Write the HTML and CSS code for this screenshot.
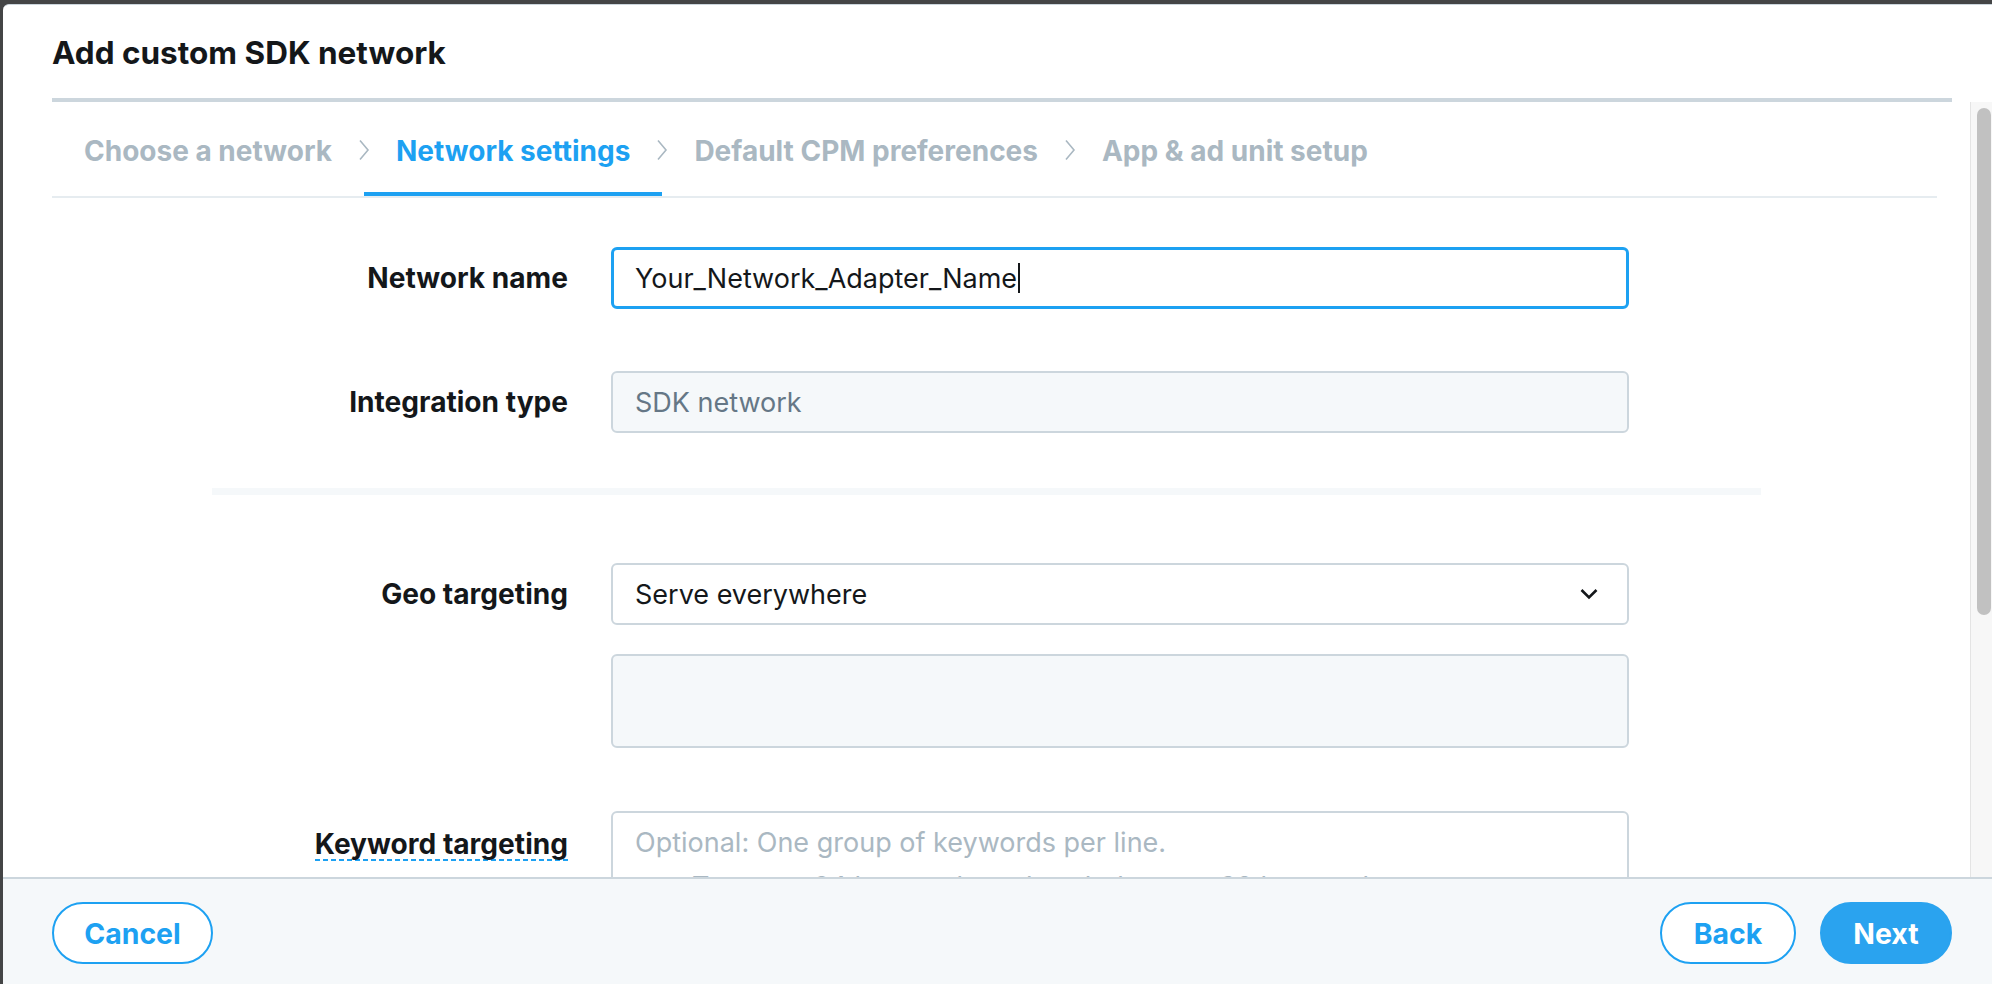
FILE: index.html
```html
<!DOCTYPE html>
<html lang="en">
<head>
<meta charset="utf-8">
<title>Add custom SDK network</title>
<link rel="stylesheet" href="styles.css">
</head>
<body>
<div class="modal">
  <header class="modal-header">
    <h1 class="title">Add custom SDK network</h1>
    <div class="title-rule"></div>
  </header>

  <div class="modal-main">
    <div class="scroll-area">
      <nav class="steps">
        <div class="step">Choose a network</div>
        <div class="sep"><svg width="12" height="22" viewBox="0 0 12 22"><polyline points="2,1.5 10,11 2,20.5" fill="none" stroke="#aab8c2" stroke-width="1.6"/></svg></div>
        <div class="step active">Network settings</div>
        <div class="sep"><svg width="12" height="22" viewBox="0 0 12 22"><polyline points="2,1.5 10,11 2,20.5" fill="none" stroke="#aab8c2" stroke-width="1.6"/></svg></div>
        <div class="step">Default CPM preferences</div>
        <div class="sep"><svg width="12" height="22" viewBox="0 0 12 22"><polyline points="2,1.5 10,11 2,20.5" fill="none" stroke="#aab8c2" stroke-width="1.6"/></svg></div>
        <div class="step">App &amp; ad unit setup</div>
      </nav>

      <div class="form">
        <div class="row row-first">
          <div class="label"><span>Network name</span></div>
          <div class="field focus">Your_Network_Adapter_Name<span class="caret"></span></div>
        </div>

        <div class="row row-gap">
          <div class="label"><span>Integration type</span></div>
          <div class="field readonly">SDK network</div>
        </div>

        <div class="divider"></div>

        <div class="row row-geo">
          <div class="label"><span>Geo targeting</span></div>
          <div class="field select">
            <span>Serve everywhere</span>
            <svg class="select-chevron" width="20" height="12" viewBox="0 0 20 12"><polyline points="2.5,2 10,9.5 17.5,2" fill="none" stroke="#14171a" stroke-width="2.6"/></svg>
          </div>
        </div>

        <div class="row row-box">
          <div class="label"></div>
          <div class="box"></div>
        </div>

        <div class="row row-keyword">
          <div class="label"><span class="dotted">Keyword targeting</span></div>
          <div class="textarea">
            <div class="ph-line">Optional: One group of keywords per line.</div>
            <div class="ph-line ph-indent">Target at 64 keywords and exclude up to 32 keywords</div>
          </div>
        </div>
      </div>
    </div>
    <div class="scrollbar"><div class="thumb"></div></div>
  </div>

  <footer class="modal-footer">
    <button class="btn btn-cancel">Cancel</button>
    <div class="footer-right">
      <button class="btn btn-back">Back</button>
      <button class="btn btn-next">Next</button>
    </div>
  </footer>
</div>
</body>
</html>
```

FILE: styles.css
```css
* { box-sizing: border-box; }

html, body {
  margin: 0;
  padding: 0;
  height: 984px;
  overflow: hidden;
}

body {
  background: #444546;
  font-family: "Inter", "Roboto", "Liberation Sans", sans-serif;
  color: #14171a;
}

.modal {
  margin: 4px 0 0 3px;
  height: 980px;
  background: #ffffff;
  border-top: 1px solid #ccd6dd;
  border-top-left-radius: 6px;
  display: flex;
  flex-direction: column;
  overflow: hidden;
}

.modal-header {
  padding: 0 40px 0 49px;
  flex: 0 0 auto;
}

.title {
  margin: 0;
  height: 93px;
  padding-top: 2px;
  display: flex;
  align-items: center;
  font-size: 31.5px;
  font-weight: 700;
  color: #14171a;
}

.title-rule {
  height: 4px;
  background: #ccd6dd;
}

.modal-main {
  flex: 0 0 775px;
  display: flex;
  min-height: 0;
}

.scroll-area {
  flex: 1;
  overflow: hidden;
}

.scrollbar {
  width: 22px;
  background: #f7f7f7;
  border-left: 1px solid #e4e4e4;
  padding: 6px 0 0 6px;
}

.thumb {
  width: 14px;
  height: 507px;
  background: #c1c1c1;
  border-radius: 7px;
}

/* steps */
.steps {
  margin: 0 33px 0 49px;
  display: flex;
  border-bottom: 2px solid #e6ecf0;
}

.step {
  height: 94px;
  padding: 7px 32px 0;
  display: flex;
  align-items: center;
  border-bottom: 4px solid transparent;
  font-size: 28px;
  font-weight: 700;
  color: #aab8c2;
  white-space: nowrap;
}

.step.active {
  color: #1da1f2;
  border-bottom-color: #1da1f2;
}

.sep {
  width: 0;
  display: flex;
  justify-content: center;
  align-items: center;
  padding-top: 2px;
}

.sep svg { flex: 0 0 auto; }

/* form */
.form {
  display: flex;
  flex-direction: column;
}

.row {
  display: grid;
  grid-template-columns: 565px 1018px;
  column-gap: 43px;
}

.row-first { margin-top: 49px; }
.row-gap { margin-top: 62px; }
.row-geo { margin-top: 68px; }
.row-box { margin-top: 29px; }
.row-keyword { margin-top: 63px; }

.label {
  height: 62px;
  display: flex;
  align-items: center;
  justify-content: flex-end;
  font-size: 28.1px;
  font-weight: 700;
  color: #14171a;
}

.dotted {
  display: inline-block;
  line-height: 32px;
  padding-bottom: 1px;
  background: repeating-linear-gradient(90deg, #1da1f2 0 5px, transparent 5px 8px) left bottom / 100% 2px no-repeat;
  margin-top: 4px;
}

.field {
  height: 62px;
  border: 2px solid #ccd6dd;
  border-radius: 6px;
  padding: 0 22px;
  display: flex;
  align-items: center;
  font-size: 27px;
  color: #14171a;
  background: #ffffff;
}

.field.focus {
  border: 3px solid #1da1f2;
  padding-left: 21px;
}

.caret {
  display: inline-block;
  width: 2px;
  height: 30px;
  background: #14171a;
  margin-left: 1px;
}

.field.readonly {
  background: #f5f8fa;
  color: #657786;
}

.field.select {
  justify-content: space-between;
  padding-right: 28px;
}

.divider {
  margin: 55px 0 0 209px;
  width: 1549px;
  height: 7px;
  background: #f5f8fa;
}

.box {
  height: 94px;
  border: 2px solid #ccd6dd;
  border-radius: 6px;
  background: #f5f8fa;
}

.textarea {
  height: 220px;
  border: 2px solid #ccd6dd;
  border-radius: 6px;
  padding: 9px 22px 0;
  font-size: 27px;
  line-height: 41px;
  color: #aab8c2;
  background: #ffffff;
}

.ph-indent {
  padding-left: 57px;
  margin-top: 3px;
}

/* footer */
.modal-footer {
  flex: 1;
  background: #f5f8fa;
  border-top: 2px solid #ccd6dd;
  padding: 23px 40px 0 49px;
  display: flex;
  justify-content: space-between;
  align-items: flex-start;
}

.footer-right {
  display: flex;
  gap: 24px;
}

.btn {
  height: 62px;
  border: 2px solid #1da1f2;
  border-radius: 31px;
  background: #ffffff;
  color: #1da1f2;
  font-family: inherit;
  font-size: 28.4px;
  font-weight: 700;
  padding: 0;
  display: flex;
  align-items: center;
  justify-content: center;
}

.btn-cancel { width: 161px; }
.btn-back { width: 136px; }
.btn-next {
  width: 132px;
  background: #2aa3ef;
  border-color: #2aa3ef;
  color: #ffffff;
}
```
